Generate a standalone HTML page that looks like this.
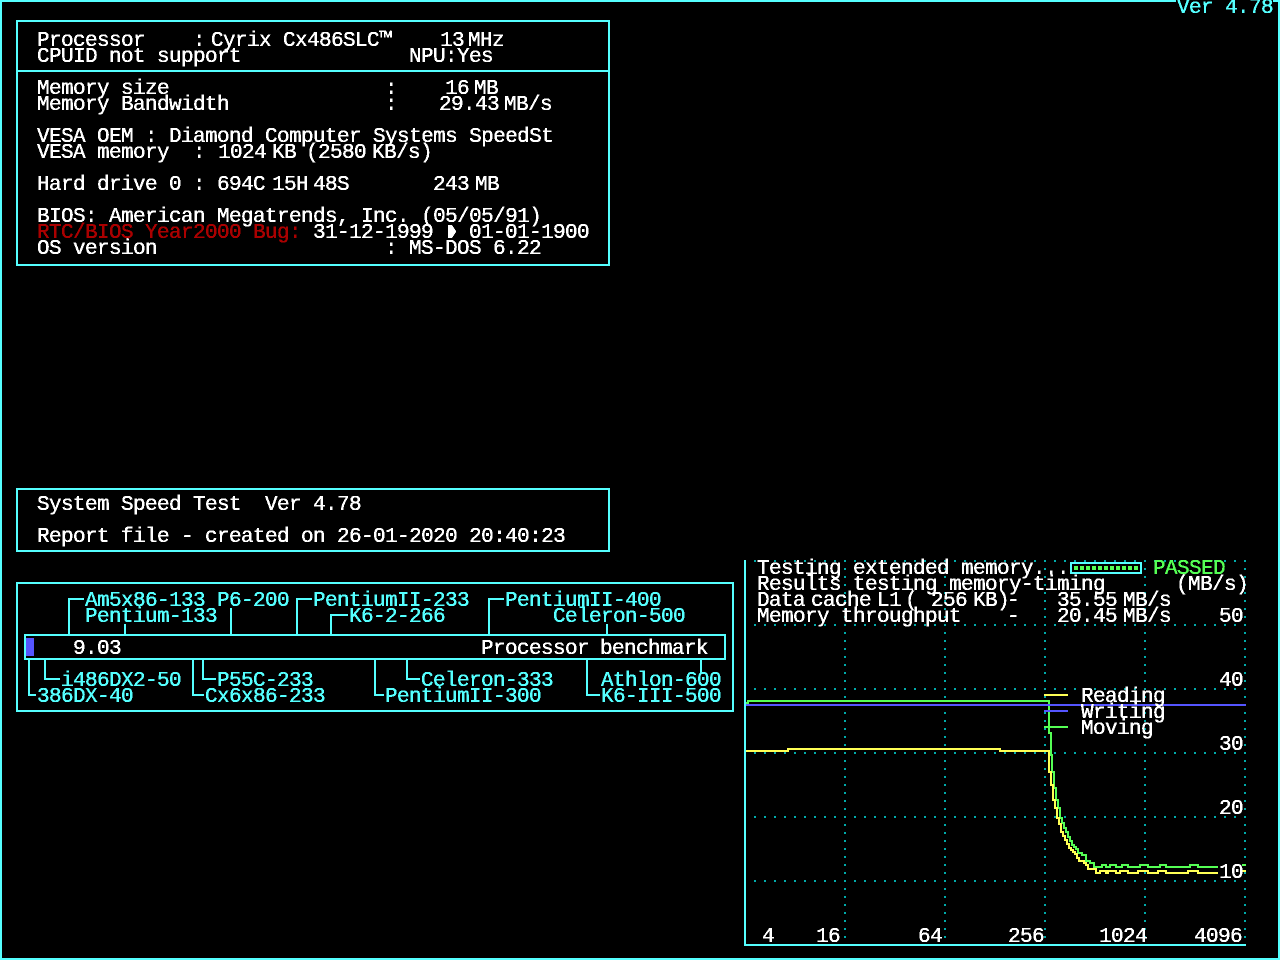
<!DOCTYPE html>
<html><head><meta charset="utf-8"><title>System Speed Test</title>
<style>
html,body{margin:0;padding:0;background:#000;width:1280px;height:960px;overflow:hidden}
svg{display:block}
text{font-family:"Liberation Mono","DejaVu Sans Mono",monospace;font-size:21px;letter-spacing:-.6px;white-space:pre;stroke-width:.25px}
.w text,text.w{fill:#fff;stroke:#fff}
.c text{fill:#55ffff;stroke:#55ffff}
</style></head><body>
<svg width="1280" height="960" viewBox="0 0 1280 960" xmlns="http://www.w3.org/2000/svg" xml:space="preserve">
<defs><filter id="t" x="0" y="0" width="1280" height="960" filterUnits="userSpaceOnUse" color-interpolation-filters="sRGB"><feComponentTransfer><feFuncA type="discrete" tableValues="0 1 1"/></feComponentTransfer></filter></defs>
<rect width="1280" height="960" fill="#000"/>
<!-- grid -->
<g stroke="#00aaaa" stroke-width="2" fill="none" shape-rendering="crispEdges">
<path stroke-dasharray="2 8" d="M754 561H1246M754 625H1246M754 689H1246M754 753H1246M754 817H1246M754 881H1246"/>
<path stroke-dasharray="2 6" d="M845 560V942M945 560V942M1045 560V942M1145 560V942M1245 560V942"/>
</g>
<!-- frames -->
<g fill="none" stroke="#55ffff" stroke-width="2" shape-rendering="crispEdges">
<rect x="1" y="1" width="1278" height="958"/>
<rect x="17" y="21" width="592" height="244"/>
<path d="M17 71H609"/>
<rect x="17" y="489" width="592" height="62"/>
<rect x="17" y="583" width="716" height="128"/>
<rect x="25" y="635" width="700" height="24"/>
<path d="M745 560V945H1246"/>
<rect x="1071" y="563" width="70" height="10"/>
<path d="M84 599H69V636M125 624V636M231 608V636M312 599H297V636M348 615H331V636M504 599H489V636M607 624V636"/>
<path d="M29 659V695H36M45 659V679H60M193 659V695H204M203 659V679H216M375 659V695H384M407 659V679H420M587 659V695H600M701 659V674"/>
</g>
<rect x="1176" y="0" width="97" height="16" fill="#000"/>
<rect x="26" y="638" width="8" height="18" fill="#5555ff"/>
<path d="M1074 568H1138" stroke="#55ff55" stroke-width="4" stroke-dasharray="4 2" shape-rendering="crispEdges"/>
<!-- curves -->
<g fill="none" stroke-width="2" shape-rendering="crispEdges">
<path stroke="#55ff55" d="M746 703H748V701H1049V733H1051V755H1052V772H1054V788H1056V800H1058V808H1060V818H1062V823H1064V828H1066V832H1068V837H1070V841H1072V845H1074V847H1076V849H1078V853H1082V855H1086V861H1090V863H1094V867H1102V865H1106V867H1110V865H1116V867H1122V865H1128V867H1140V865H1148V867H1160V865H1166V867H1190V865H1198V867H1218M1242 865H1246"/>
<path stroke="#ffff55" d="M746 751H788V749H1000V751H1049V772H1051V785H1053V800H1055V808H1057V818H1059V824H1061V832H1063V836H1065V840H1067V844H1069V848H1071V850H1073V852H1075V854H1077V858H1079V861H1084V863H1086V865H1088V869H1096V873H1100V871H1106V873H1108V871H1116V873H1120V871H1128V873H1138V871H1148V873H1158V871H1166V873H1188V871H1198V873H1218M1242 871H1246"/>
<path stroke="#5555ff" d="M746 705H1246M1044 711H1068"/>
<path stroke="#ffff55" d="M1044 695H1068"/>
<path stroke="#55ff55" d="M1044 727H1068"/>
</g>
<g filter="url(#t)">
<g transform="translate(1 0)">
<g class="w">
<text x="36" y="46">Processor</text><text x="192" y="46">:</text><text x="210" y="46">Cyrix Cx486SLC™</text><text x="439" y="46">13</text><text x="467" y="46">MHz</text>
<text x="36" y="62">CPUID not support</text><text x="408" y="62">NPU:Yes</text>
<text x="36" y="94">Memory size</text><text x="384" y="94">:</text><text x="444" y="94">16</text><text x="473" y="94">MB</text>
<text x="36" y="110">Memory Bandwidth</text><text x="384" y="110">:</text><text x="438" y="110">29.43</text><text x="503" y="110">MB/s</text>
<text x="36" y="142">VESA OEM : Diamond Computer Systems SpeedSt</text>
<text x="36" y="158">VESA memory  :</text><text x="217" y="158">1024</text><text x="271" y="158">KB</text><text x="305" y="158">(2580</text><text x="371" y="158">KB/s)</text>
<text x="36" y="190">Hard drive 0 :</text><text x="216" y="190">694C</text><text x="271" y="190">15H</text><text x="312" y="190">48S</text><text x="432" y="190">243</text><text x="474" y="190">MB</text>
<text x="36" y="222">BIOS: American Megatrends, Inc. (05/05/91)</text>
<text x="36" y="238" style="fill:#aa0000;stroke:#aa0000">RTC/BIOS Year2000 Bug:</text><text x="312" y="238">31-12-1999</text><text x="468" y="238">01-01-1900</text>
<text x="36" y="254">OS version</text><text x="384" y="254">:</text><text x="408" y="254">MS-DOS 6.22</text>
<text x="36" y="510">System Speed Test  Ver 4.78</text>
<text x="36" y="542">Report file - created on 26-01-2020 20:40:23</text>
<text x="72" y="654">9.03</text><text x="480" y="654">Processor</text><text x="599" y="654">benchmark</text>
<text x="756" y="574">Testing extended memory...</text>
<text x="756" y="590">Results testing memory-timing</text><text x="1175" y="590">(</text><text x="1187" y="590">MB/s)</text>
<text x="756" y="606">Data</text><text x="810" y="606">cache</text><text x="876" y="606">L1</text><text x="904" y="606">(</text><text x="930" y="606">256</text><text x="972" y="606">KB)</text><text x="1006" y="606">-</text><text x="1056" y="606">35.55</text><text x="1122" y="606">MB/s</text>
<text x="756" y="622">Memory throughput</text><text x="1006" y="622">-</text><text x="1056" y="622">20.45</text><text x="1122" y="622">MB/s</text>
<text x="1218" y="622">50</text><text x="1218" y="686">40</text><text x="1218" y="750">30</text><text x="1218" y="814">20</text><text x="1218" y="878">10</text>
<text x="1080" y="702">Reading</text><text x="1080" y="718">Writing</text><text x="1080" y="734">Moving</text>
<text x="761" y="942">4</text><text x="815" y="942">16</text><text x="917" y="942">64</text><text x="1007" y="942">256</text><text x="1098" y="942">1024</text><text x="1193" y="942">4096</text>
</g>
<g class="c">
<text x="1176" y="13">Ver 4.78</text>
<text x="84" y="606">Am5x86-133</text><text x="216" y="606">P6-200</text><text x="312" y="606">PentiumII-233</text><text x="504" y="606">PentiumII-400</text>
<text x="84" y="622">Pentium-133</text><text x="348" y="622">K6-2-266</text><text x="552" y="622">Celeron-500</text>
<text x="60" y="686">i486DX2-50</text><text x="216" y="686">P55C-233</text><text x="420" y="686">Celeron-333</text><text x="600" y="686">Athlon-600</text>
<text x="36" y="702">386DX-40</text><text x="204" y="702">Cx6x86-233</text><text x="384" y="702">PentiumII-300</text><text x="600" y="702">K6-III-500</text>
</g>
<text x="1152" y="574" style="fill:#55ff55;stroke:#55ff55">PASSED</text>
</g>
</g>
<path d="M448 225H452L456 231V232L452 238H448Z" fill="#fff" shape-rendering="crispEdges"/>
</svg>
</body></html>
